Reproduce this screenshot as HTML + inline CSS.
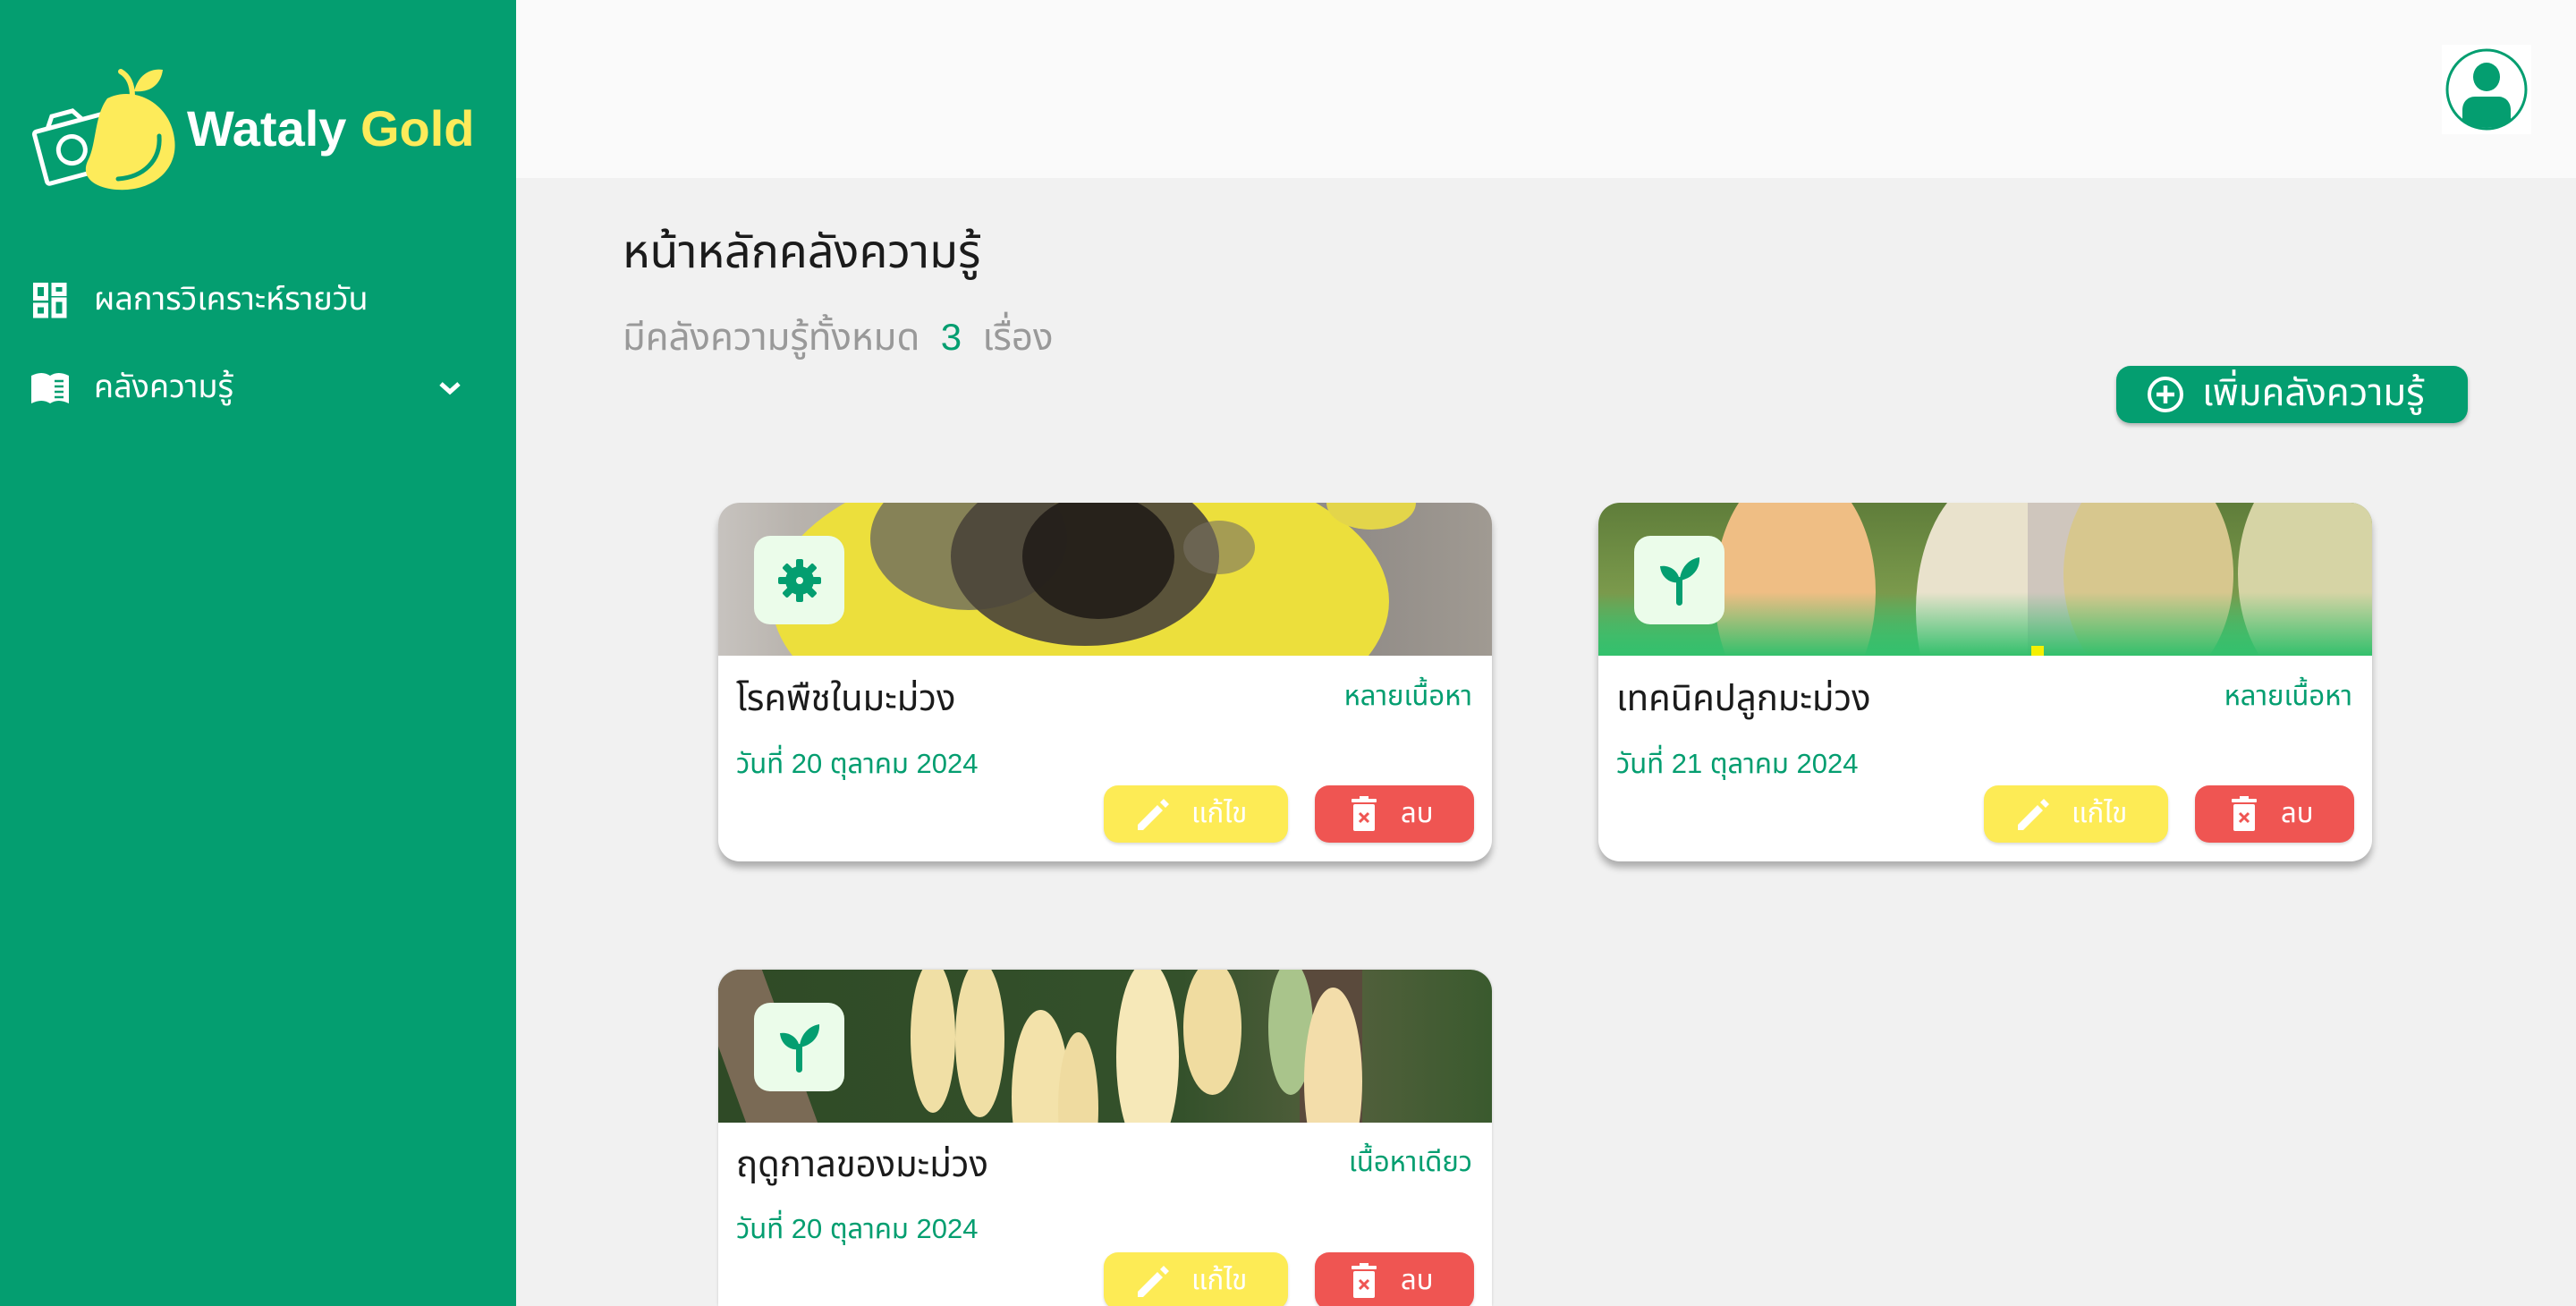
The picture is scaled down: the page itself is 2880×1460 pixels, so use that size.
<!DOCTYPE html>
<html style="overflow:hidden;width:2880px;height:1460px"><head><meta charset="utf-8">
<style>
*{margin:0;padding:0;box-sizing:border-box}
body{width:2880px;height:1460px;overflow:hidden;background:#f1f1f1;font-family:"Liberation Sans","Noto Sans Thai","Noto Sans CJK SC",sans-serif;position:relative}
.side{position:absolute;left:0;top:0;width:577px;height:1460px;background:#049e70}
.hdr{position:absolute;left:577px;top:0;right:0;height:199px;background:#fafafa}
.abs{position:absolute}
.menu{position:absolute;color:#fff;font-size:36px;line-height:1}
.card{position:absolute;width:865px;background:#fff;border-radius:24px;overflow:hidden;box-shadow:0 7px 8px rgba(0,0,0,.28)}
.img{position:relative;height:171px;overflow:hidden}
.ico{position:absolute;left:40px;top:37px;width:101px;height:99px;background:#ebfcea;border-radius:18px;display:flex;align-items:center;justify-content:center}
.t{position:absolute;left:20px;font-size:40px;color:#1b1b1b;line-height:1}
.tag{position:absolute;right:22px;font-size:31px;color:#049e70;line-height:1}
.d{position:absolute;left:20px;font-size:31px;color:#049e70;line-height:1}
.be{position:absolute;left:431px;width:206px;height:64px;background:#fdeb55;border-radius:16px;box-shadow:0 2px 3px rgba(0,0,0,.15)}
.bd{position:absolute;left:667px;width:178px;height:64px;background:#ef5552;border-radius:16px;box-shadow:0 2px 3px rgba(0,0,0,.15)}
.bt{position:absolute;top:15px;font-size:31px;color:#fff;line-height:1}
.e{position:absolute;border-radius:50%}
</style></head><body>
<div class="side"></div>
<div class="hdr"></div>

<!-- logo -->
<svg class="abs" style="left:30px;top:70px" width="190" height="150" viewBox="0 0 190 150">
 <g transform="rotate(-15 60 95)"><rect x="14" y="65" width="84" height="60" rx="3" fill="none" stroke="#fff" stroke-width="5"/><path d="M30 65 l8 -12 h24 l8 12" fill="none" stroke="#fff" stroke-width="5"/><circle cx="50" cy="95" r="15" fill="none" stroke="#fff" stroke-width="5"/></g>
 <path d="M90 40 C120 25 160 45 165 85 C170 120 140 145 100 142 C75 140 60 128 68 110 C78 92 75 60 90 40Z" fill="#fdeb5a"/>
 <path d="M148 82 C150 110 130 128 102 130" fill="none" stroke="#049e70" stroke-width="5" stroke-linecap="round"/>
 <path d="M118 38 C118 22 112 14 105 10" fill="none" stroke="#fdeb5a" stroke-width="6" stroke-linecap="round"/>
 <path d="M120 32 C125 12 140 6 152 8 C150 24 138 34 120 32Z" fill="#fdeb5a"/>
</svg>
<div class="abs" style="left:209px;top:116px;font-size:56px;font-weight:bold;color:#fff;line-height:1">Wataly <span style="color:#fdeb5a">Gold</span></div>

<!-- menu -->
<svg class="abs" style="left:37px;top:316px" width="38" height="40" viewBox="0 0 38 40"><g fill="none" stroke="#fff" stroke-width="5"><rect x="2.5" y="2.5" width="12" height="15"/><rect x="2.5" y="25" width="12" height="12"/><rect x="23" y="2.5" width="12" height="10"/><rect x="23" y="19" width="12" height="18"/></g></svg>
<div class="menu" style="left:105px;top:316px">ผลการวิเคราะห์รายวัน</div>
<svg class="abs" style="left:33px;top:414px" width="46" height="40" viewBox="0 0 46 40"><path d="M2 6 C10 2 17 2 23 6 C29 2 36 2 44 6 V37 C36 33 29 33 23 37 C17 33 10 33 2 37Z" fill="#fff"/><g stroke="#049e70" stroke-width="2.5"><path d="M28 12h10M28 18h10M28 24h10M28 30h10"/></g></svg>
<div class="menu" style="left:105px;top:414px">คลังความรู้</div>
<svg class="abs" style="left:490px;top:426px" width="26" height="16" viewBox="0 0 26 16"><path d="M3 3 L13 12 L23 3" fill="none" stroke="#fff" stroke-width="5"/></svg>

<!-- avatar -->
<div class="abs" style="left:2730px;top:50px;width:100px;height:100px;background:#fff"></div>
<svg class="abs" style="left:2733px;top:53px" width="94" height="94" viewBox="0 0 94 94"><circle cx="47" cy="47" r="44" fill="#fff" stroke="#049e70" stroke-width="3"/><ellipse cx="47" cy="33" rx="15" ry="16" fill="#049e70"/><path d="M20 82 V70 C20 61 26 55 34 55 H60 C68 55 74 61 74 70 V82 C62 92 32 92 20 82Z" fill="#049e70"/></svg>

<!-- headings -->
<div class="abs" style="left:696px;top:254px;font-size:52px;color:#1b1b1b;line-height:1.1">หน้าหลักคลังความรู้</div>
<div class="abs" style="left:696px;top:354px;font-size:42px;color:#999;line-height:1.1">มีคลังความรู้ทั้งหมด&nbsp; <span style="color:#049e70">3</span>&nbsp; เรื่อง</div>

<!-- add button -->
<div class="abs" style="left:2366px;top:409px;width:393px;height:64px;background:#049e70;border-radius:16px;box-shadow:0 3px 4px rgba(0,0,0,.25)"></div>
<svg class="abs" style="left:2400px;top:420px" width="42" height="42" viewBox="0 0 42 42"><circle cx="21" cy="21" r="18" fill="none" stroke="#fff" stroke-width="4"/><path d="M21 11v20M11 21h20" stroke="#fff" stroke-width="4.5"/></svg>
<div class="abs" style="left:2462px;top:414px;font-size:42px;color:#fff;line-height:1.2">เพิ่มคลังความรู้</div>

<!-- card 1 -->
<div class="card" style="left:803px;top:562px;height:401px">
 <div class="img" style="background:linear-gradient(90deg,#c7c3bf 0,#b8b3ad 10%,#8f8a86 80%,#a09a92 100%)">
  <div class="e" style="left:60px;top:-60px;width:690px;height:340px;background:#ecdf3c"></div>
  <div class="e" style="left:680px;top:-30px;width:100px;height:60px;background:#e3d54a"></div>
  <div class="e" style="left:170px;top:-40px;width:220px;height:160px;background:#6d6a5e;opacity:.8"></div>
  <div class="e" style="left:260px;top:-40px;width:300px;height:200px;background:#4a443a;opacity:.9"></div>
  <div class="e" style="left:340px;top:-10px;width:170px;height:140px;background:#1e1a16;opacity:.85"></div>
  <div class="e" style="left:520px;top:20px;width:80px;height:60px;background:#777062;opacity:.6"></div>
  <div class="ico"><svg width="50" height="50" viewBox="0 0 50 50"><g fill="#049e70" transform="translate(25 25)"><circle r="16"/><g id="sp"><rect x="-4" y="-24" width="8" height="10" rx="2"/></g><use href="#sp" transform="rotate(45)"/><use href="#sp" transform="rotate(90)"/><use href="#sp" transform="rotate(135)"/><use href="#sp" transform="rotate(180)"/><use href="#sp" transform="rotate(225)"/><use href="#sp" transform="rotate(270)"/><use href="#sp" transform="rotate(315)"/></g><circle cx="25" cy="25" r="4" fill="#ebfcea"/></svg></div>
 </div>
 <div class="t" style="top:199px">โรคพืชในมะม่วง</div>
 <div class="tag" style="top:200px">หลายเนื้อหา</div>
 <div class="d" style="top:276px">วันที่ 20 ตุลาคม 2024</div>
 <div class="be" style="top:316px"><svg class="abs" style="left:34px;top:14px" width="42" height="38" viewBox="0 0 42 38"><path d="M4 30 L26 8 L32 14 L10 36 H4Z M29 5 L33 1 L39 7 L35 11Z" fill="#fff"/></svg><div class="bt" style="left:98px">แก้ไข</div></div>
 <div class="bd" style="top:316px"><svg class="abs" style="left:40px;top:12px" width="30" height="40" viewBox="0 0 30 40"><rect x="1" y="3" width="28" height="4" rx="1" fill="#fff"/><rect x="10" y="0" width="10" height="4" fill="#fff"/><rect x="3" y="9" width="24" height="30" rx="2" fill="#fff"/><path d="M10 19l10 10M20 19l-10 10" stroke="#ef5552" stroke-width="3"/></svg><div class="bt" style="left:96px">ลบ</div></div>
</div>

<!-- card 2 -->
<div class="card" style="left:1787px;top:562px;height:401px">
 <div class="img" style="background:linear-gradient(180deg,#5f7d3a,#7b9a4c 60%,#4fbd6f)">
  <div class="e" style="left:130px;top:-40px;width:180px;height:280px;background:#efbe84"></div>
  <div class="e" style="left:355px;top:-30px;width:175px;height:300px;background:#e9e2cc"></div>
  <div class="abs" style="left:480px;top:0;width:80px;height:171px;background:#cfc6bd"></div>
  <div class="e" style="left:520px;top:-50px;width:190px;height:260px;background:#d7c78e"></div>
  <div class="e" style="left:715px;top:-50px;width:170px;height:260px;background:#d6d4a5"></div>
  <div class="abs" style="left:0;top:100px;width:865px;height:71px;background:linear-gradient(180deg,rgba(60,200,110,0),#33c06c)"></div>
  <div class="abs" style="left:484px;top:160px;width:14px;height:11px;background:#f5f000"></div>
  <div class="ico"><svg width="50" height="60" viewBox="0 0 50 60"><path d="M25 32 C25 20 14 12 3 14 C4 26 14 34 25 32Z M25 28 C27 14 36 6 47 4 C48 18 38 28 25 30Z" fill="#049e70"/><rect x="21" y="26" width="7" height="32" rx="3.5" fill="#049e70"/></svg></div>
 </div>
 <div class="t" style="top:199px">เทคนิคปลูกมะม่วง</div>
 <div class="tag" style="top:200px">หลายเนื้อหา</div>
 <div class="d" style="top:276px">วันที่ 21 ตุลาคม 2024</div>
 <div class="be" style="top:316px"><svg class="abs" style="left:34px;top:14px" width="42" height="38" viewBox="0 0 42 38"><path d="M4 30 L26 8 L32 14 L10 36 H4Z M29 5 L33 1 L39 7 L35 11Z" fill="#fff"/></svg><div class="bt" style="left:98px">แก้ไข</div></div>
 <div class="bd" style="top:316px"><svg class="abs" style="left:40px;top:12px" width="30" height="40" viewBox="0 0 30 40"><rect x="1" y="3" width="28" height="4" rx="1" fill="#fff"/><rect x="10" y="0" width="10" height="4" fill="#fff"/><rect x="3" y="9" width="24" height="30" rx="2" fill="#fff"/><path d="M10 19l10 10M20 19l-10 10" stroke="#ef5552" stroke-width="3"/></svg><div class="bt" style="left:96px">ลบ</div></div>
</div>

<!-- card 3 -->
<div class="card" style="left:803px;top:1084px;height:376px;border-radius:24px 24px 0 0;box-shadow:0 0 3px rgba(0,0,0,.15)">
 <div class="img" style="background:linear-gradient(90deg,#2f4a26,#34512b 60%,#54603d 80%,#3a5a2e)">
  <div class="abs" style="left:0;top:0;width:80px;height:171px;background:#7a6a55;transform:skewX(20deg)"></div>
  <div class="abs" style="left:650px;top:0;width:70px;height:171px;background:#5a4a3c"></div>
  <div class="e" style="left:215px;top:-10px;width:50px;height:170px;background:#f0dfa5"></div>
  <div class="e" style="left:265px;top:-10px;width:55px;height:175px;background:#f0dfa5"></div>
  <div class="e" style="left:328px;top:45px;width:65px;height:195px;background:#f3e2aa"></div>
  <div class="e" style="left:380px;top:70px;width:45px;height:170px;background:#efdba0"></div>
  <div class="e" style="left:445px;top:-10px;width:70px;height:215px;background:#f6e8b8"></div>
  <div class="e" style="left:520px;top:-10px;width:65px;height:150px;background:#f0dca0"></div>
  <div class="e" style="left:615px;top:-10px;width:50px;height:150px;background:#a9c48b"></div>
  <div class="e" style="left:655px;top:20px;width:65px;height:210px;background:#f3ddaa"></div>
  <div class="ico"><svg width="50" height="60" viewBox="0 0 50 60"><path d="M25 32 C25 20 14 12 3 14 C4 26 14 34 25 32Z M25 28 C27 14 36 6 47 4 C48 18 38 28 25 30Z" fill="#049e70"/><rect x="21" y="26" width="7" height="32" rx="3.5" fill="#049e70"/></svg></div>
 </div>
 <div class="t" style="top:198px">ฤดูกาลของมะม่วง</div>
 <div class="tag" style="top:199px">เนื้อหาเดียว</div>
 <div class="d" style="top:274px">วันที่ 20 ตุลาคม 2024</div>
 <div class="be" style="top:316px"><svg class="abs" style="left:34px;top:14px" width="42" height="38" viewBox="0 0 42 38"><path d="M4 30 L26 8 L32 14 L10 36 H4Z M29 5 L33 1 L39 7 L35 11Z" fill="#fff"/></svg><div class="bt" style="left:98px">แก้ไข</div></div>
 <div class="bd" style="top:316px"><svg class="abs" style="left:40px;top:12px" width="30" height="40" viewBox="0 0 30 40"><rect x="1" y="3" width="28" height="4" rx="1" fill="#fff"/><rect x="10" y="0" width="10" height="4" fill="#fff"/><rect x="3" y="9" width="24" height="30" rx="2" fill="#fff"/><path d="M10 19l10 10M20 19l-10 10" stroke="#ef5552" stroke-width="3"/></svg><div class="bt" style="left:96px">ลบ</div></div>
</div>
</body></html>
